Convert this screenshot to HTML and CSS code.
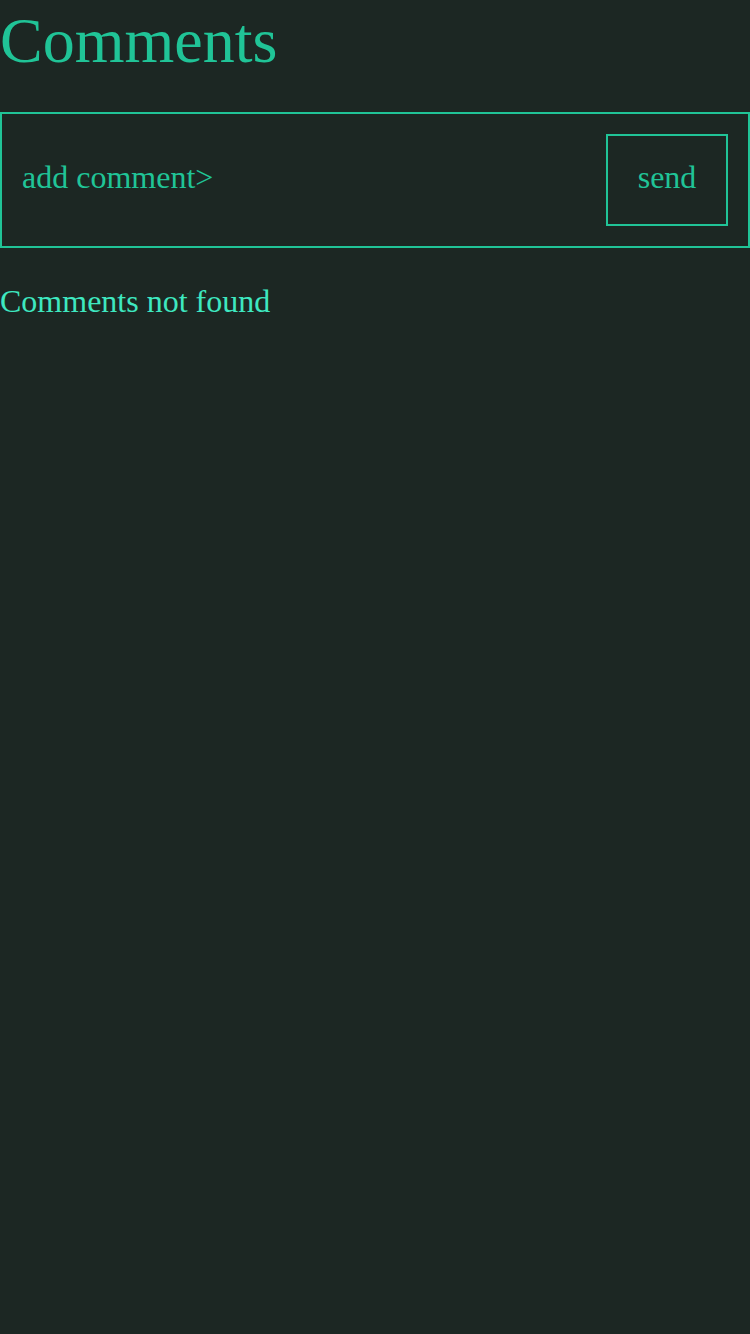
FILE: index.html
```html
<!DOCTYPE html>
<html lang="en">
<head>
<meta charset="utf-8">
<title>Comments</title>
<link rel="stylesheet" href="styles.css">
</head>
<body>
<main class="page">
  <h1 class="title">Comments</h1>
  <form class="comment-form">
    <input class="comment-input" type="text" placeholder="add comment&gt;">
    <button class="send-btn" type="button">send</button>
  </form>
  <p class="empty">Comments not found</p>
</main>
</body>
</html>
```

FILE: styles.css
```css
html, body {
  margin: 0;
  padding: 0;
  background: #1c2723;
  height: 100%;
}
body {
  font-family: "Liberation Serif", "Times New Roman", serif;
  color: #20c497;
}
.page {
  display: flex;
  flex-direction: column;
}
.title {
  margin: 4px 0 0 0;
  font-size: 64px;
  font-weight: normal;
  line-height: 74px;
  color: #20c497;
}
.comment-form {
  margin: 34px 0 0 0;
  border: 2px solid #20c497;
  padding: 20px;
  display: flex;
  align-items: center;
  gap: 20px;
}
.comment-input {
  flex: 1;
  min-width: 0;
  background: transparent;
  border: none;
  outline: none;
  padding: 0;
  margin: 0 0 6px 0;
  font-family: inherit;
  font-size: 32px;
  color: #20c497;
  height: 40px;
}
.comment-input::placeholder {
  color: #20c497;
  opacity: 1;
}
.send-btn {
  box-sizing: border-box;
  width: 122px;
  height: 92px;
  margin: 0;
  padding: 0 0 6px 0;
  background: transparent;
  border: 2px solid #20c497;
  font-family: inherit;
  font-size: 32px;
  color: #20c497;
}
.empty {
  margin: 35px 0 0 0;
  font-size: 32px;
  line-height: 37px;
  color: #3ee8c0;
}
```
